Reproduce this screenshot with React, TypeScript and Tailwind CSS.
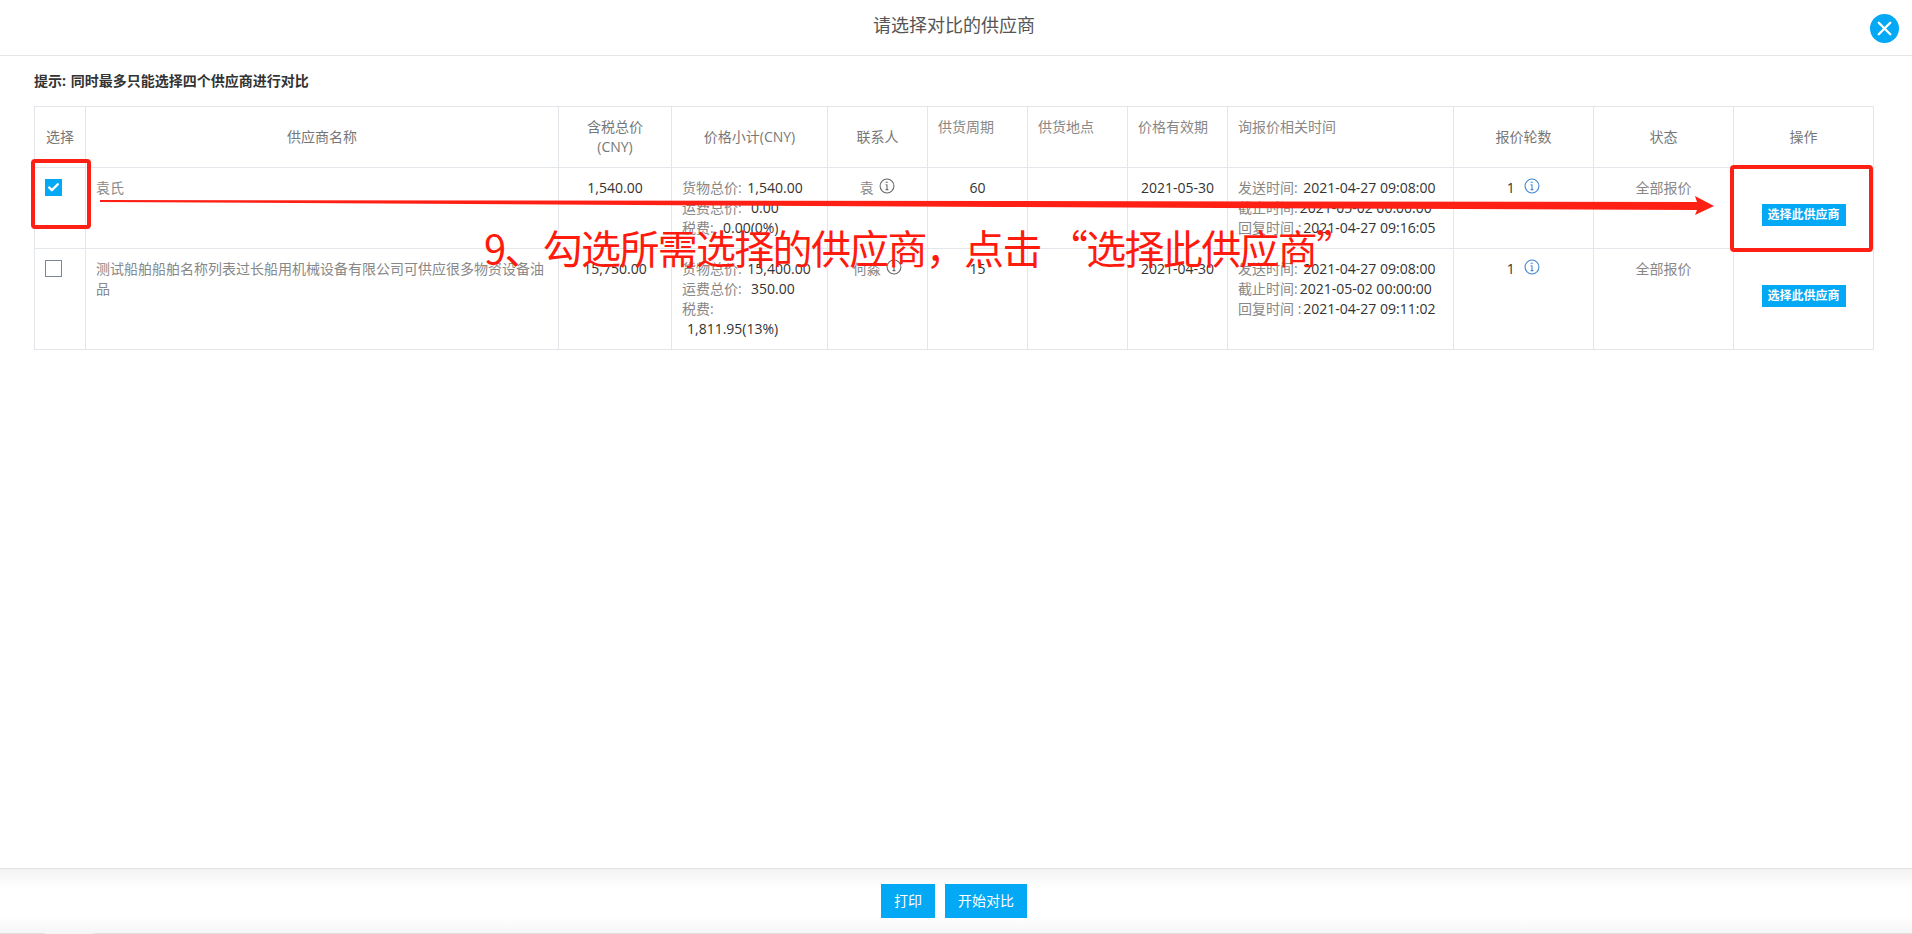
import { X, Check } from 'lucide-react'

const FONT = "font-['Open_Sans','Noto_Sans_CJK_SC',sans-serif]"

function InfoIcon({ blue }: { blue?: boolean }) {
  const color = blue ? '#3f86d0' : '#666666'
  return (
    <svg width="16" height="16" viewBox="0 0 15 15" className="ml-[2px] inline-block align-[-1px]" fill="none">
      <circle cx="7.5" cy="7.5" r="6.5" stroke={color} strokeWidth="1" />
      <path d="M6.2 4h2M7.5 6.2v4.6M6.2 6.4h1.3M6.2 10.9h2.6" stroke={color} strokeWidth="1" />
    </svg>
  )
}

function Num({ children }: { children: React.ReactNode }) {
  return <span className="text-[#333333]">{children}</span>
}

function Val({ children }: { children: React.ReactNode }) {
  return <span className="ml-[2px] text-[#333333]">{children}</span>
}

function Checkbox({ checked }: { checked?: boolean }) {
  if (checked) {
    return (
      <span className="mt-px flex h-[17px] w-[17px] items-center justify-center bg-[#03a9f4]">
        <Check size={13} color="#ffffff" strokeWidth={4.5} />
      </span>
    )
  }
  return <span className="mt-px block h-[17px] w-[17px] border border-[#7a8794] bg-white" />
}

function SelectButton() {
  return (
    <button className="mx-auto mt-[26px] block h-[22px] w-[84px] bg-[#03a9f4] text-[12px] font-bold leading-[22px] text-white">
      选择此供应商
    </button>
  )
}

const th = 'border border-[#e3e6ea] px-[10px] align-middle text-center font-normal text-[14px] leading-[20px] text-[#777777]'
const thTop = 'border border-[#e3e6ea] px-[10px] pt-[10px] align-top text-left font-normal text-[14px] leading-[20px] text-[#888888]'
const td = 'border border-[#e3e6ea] px-[10px] pt-[10px] pb-[10px] align-top text-[14px] leading-[20px] text-[#888888]'

const rows = [
  {
    checked: true,
    name: '袁氏',
    total: '1,540.00',
    goods: '1,540.00',
    freight: '0.00',
    tax: '0.00(0%)',
    contact: '袁',
    cycle: '60',
    valid: '2021-05-30',
    reply: '2021-04-27 09:16:05',
    height: 'h-[81px]',
  },
  {
    checked: false,
    name: '测试船舶船舶名称列表过长船用机械设备有限公司可供应很多物资设备油品',
    total: '15,750.00',
    goods: '15,400.00',
    freight: '350.00',
    tax: '1,811.95(13%)',
    contact: '何淼',
    cycle: '15',
    valid: '2021-04-30',
    reply: '2021-04-27 09:11:02',
    height: 'h-[101px]',
  },
]

export default function App() {
  return (
    <div className={`relative flex h-screen flex-col overflow-hidden bg-white ${FONT}`}>
      <header className="flex h-[56px] shrink-0 items-center justify-center border-b border-[#e5e5e5] pb-[4px] pr-[4px]">
        <h1 className="text-[18px] font-normal text-[#555555]">请选择对比的供应商</h1>
      </header>
      <button className="absolute right-[13px] top-[14px] flex h-[29px] w-[29px] items-center justify-center rounded-full bg-[#03a9f4]">
        <X size={23} color="#ffffff" strokeWidth={2.5} />
      </button>

      <main className="flex-1 px-[34px]">
        <p className="mt-[15px] text-[14px] font-bold leading-[20px] text-[#333333]">
          提示:<span className="ml-[1px]"> 同时最多只能选择四个供应商进行对比</span>
        </p>
        <table className="mt-[15px] w-[1839px] table-fixed border-collapse">
          <colgroup>
            <col className="w-[51px]" />
            <col className="w-[473px]" />
            <col className="w-[113px]" />
            <col className="w-[156px]" />
            <col className="w-[100px]" />
            <col className="w-[100px]" />
            <col className="w-[100px]" />
            <col className="w-[100px]" />
            <col className="w-[226px]" />
            <col className="w-[140px]" />
            <col className="w-[140px]" />
            <col className="w-[140px]" />
          </colgroup>
          <thead>
            <tr className="h-[61px]">
              <th className={th + ' !px-0'}>选择</th>
              <th className={th}>供应商名称</th>
              <th className={th}>
                含税总价
                <br />
                (CNY)
              </th>
              <th className={th}>价格小计(CNY)</th>
              <th className={th}>联系人</th>
              <th className={thTop}>供货周期</th>
              <th className={thTop}>供货地点</th>
              <th className={thTop}>价格有效期</th>
              <th className={thTop}>询报价相关时间</th>
              <th className={th}>报价轮数</th>
              <th className={th}>状态</th>
              <th className={th}>操作</th>
            </tr>
          </thead>
          <tbody>
            {rows.map((r) => (
              <tr key={r.name} className={r.height}>
                <td className={td}>
                  <Checkbox checked={r.checked} />
                </td>
                <td className={td}>{r.name}</td>
                <td className={td + ' text-center'}>
                  <Num>{r.total}</Num>
                </td>
                <td className={td}>
                  <div>
                    货物总价: <Val>{r.goods}</Val>
                  </div>
                  <div>
                    运费总价:&nbsp; <Val>{r.freight}</Val>
                  </div>
                  {r.checked ? (
                    <div>
                      税费:&nbsp; <Val>{r.tax}</Val>
                    </div>
                  ) : (
                    <div>
                      税费:
                      <div className="pl-[5px]">
                        <Num>{r.tax}</Num>
                      </div>
                    </div>
                  )}
                </td>
                <td className={td + ' text-center'}>
                  {r.contact} <InfoIcon />
                </td>
                <td className={td + ' text-center'}>
                  <Num>{r.cycle}</Num>
                </td>
                <td className={td} />
                <td className={td + ' !px-0 text-center'}>
                  <Num>{r.valid}</Num>
                </td>
                <td className={td}>
                  <div>
                    发送时间: <Val>2021-04-27 09:08:00</Val>
                  </div>
                  <div>
                    截止时间:<Val>2021-05-02 00:00:00</Val>
                  </div>
                  <div>
                    回复时间 :<Val>{r.reply}</Val>
                  </div>
                </td>
                <td className={td + ' text-center'}>
                  <Num>1</Num>&nbsp; <InfoIcon blue />
                </td>
                <td className={td + ' text-center'}>全部报价</td>
                <td className={td}>
                  <SelectButton />
                </td>
              </tr>
            ))}
          </tbody>
        </table>
      </main>

      <footer className="relative flex h-[66px] shrink-0 items-center justify-center gap-[10px] border-y border-y-[#e2e2e2] bg-[linear-gradient(#f3f3f3,#ffffff_30%,#ffffff_75%,#f6f6f6)] pb-[1px] pr-[4px]">
        <button className="h-[34px] w-[54px] bg-[#03a9f4] text-[14px] text-white">打印</button>
        <button className="h-[34px] w-[82px] bg-[#03a9f4] text-[14px] text-white">开始对比</button>
        <span className="absolute -bottom-px left-[45px] h-px w-[48px] bg-[#f4f4f4]" />
      </footer>

      {/* annotation layer drawn over the screenshot */}
      <div className="absolute left-[31px] top-[159px] h-[70px] w-[60px] rounded-[4px] border-[4px] border-[#ff2015]" />
      <div className="absolute left-[1730px] top-[165px] h-[87px] w-[143px] rounded-[4px] border-[4px] border-[#ff2015]" />
      <svg className="pointer-events-none absolute left-0 top-0" width="1912" height="934" fill="none">
        <polygon points="100,200 1000,201 1697,202 1695,196 1714,206 1695,215 1697,210 1000,207 100,202" fill="#ff2015" />
      </svg>
      <div
        lang="zh-CN"
        className="pointer-events-none absolute left-[484px] top-[222px] whitespace-nowrap font-['Noto_Sans_CJK_SC',sans-serif] text-[40px] leading-[50px] tracking-[-1.7px] text-[#ff1a0e]"
      >
        9、勾选所需选择的供应商，点击 “选择此供应商”
      </div>
    </div>
  )
}
